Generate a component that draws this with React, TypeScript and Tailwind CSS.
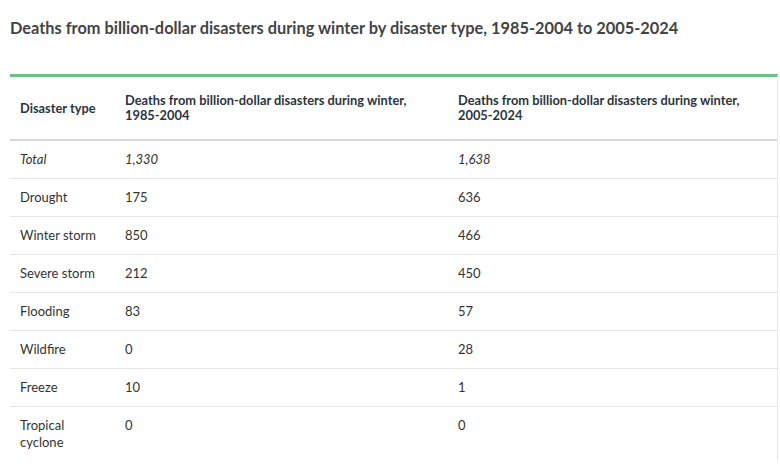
import React from "react"

interface Row {
    type: string
    early: string
    late: string
    total?: boolean
}

const rows: Row[] = [
    { type: "Total", early: "1,330", late: "1,638", total: true },
    { type: "Drought", early: "175", late: "636" },
    { type: "Winter storm", early: "850", late: "466" },
    { type: "Severe storm", early: "212", late: "450" },
    { type: "Flooding", early: "83", late: "57" },
    { type: "Wildfire", early: "0", late: "28" },
    { type: "Freeze", early: "10", late: "1" },
    { type: "Tropical cyclone", early: "0", late: "0" },
]

export default function App() {
    return (
        <div className="min-h-[468px] bg-white pl-[10px] text-[#333] [font-family:Lato,'Liberation_Sans',sans-serif]">
            <h2 className="pt-[17px] pb-[35px] text-[16.35px] leading-[22px] font-bold text-[#444]">
                Deaths from billion-dollar disasters during winter by disaster type, 1985-2004 to 2005-2024
            </h2>

            <div className="w-[768px] border-t-[3px] border-r border-t-[#6cc387] border-r-[#e8e8e8]">
                <table className="w-full border-collapse text-left text-[13px] leading-[17px]">
                    <thead>
                        <tr className="border-b-2 border-[#d5d9de] text-[#2c3440] leading-[15px] text-[12.85px]">
                            <th className="w-[105px] px-[10px] py-4 align-middle font-bold">Disaster type</th>
                            <th className="w-[333px] px-[10px] py-4 pr-6 align-middle font-bold">
                                Deaths from billion-dollar disasters during winter, 1985-2004
                            </th>
                            <th className="px-[10px] py-4 pr-6 align-middle font-bold">
                                Deaths from billion-dollar disasters during winter, 2005-2024
                            </th>
                        </tr>
                    </thead>
                    <tbody>
                        {rows.map((row, i) => (
                            <tr
                                key={row.type}
                                className={i < rows.length - 1 ? "border-b border-[#e6e6e6]" : ""}
                            >
                                <td className={`px-[10px] py-[10px] align-top ${row.total ? "italic" : ""}`}>
                                    {row.type}
                                </td>
                                <td className={`px-[10px] py-[10px] align-top ${row.total ? "italic" : ""}`}>
                                    {row.early}
                                </td>
                                <td className={`px-[10px] py-[10px] align-top ${row.total ? "italic" : ""}`}>
                                    {row.late}
                                </td>
                            </tr>
                        ))}
                    </tbody>
                </table>
            </div>
        </div>
    )
}
